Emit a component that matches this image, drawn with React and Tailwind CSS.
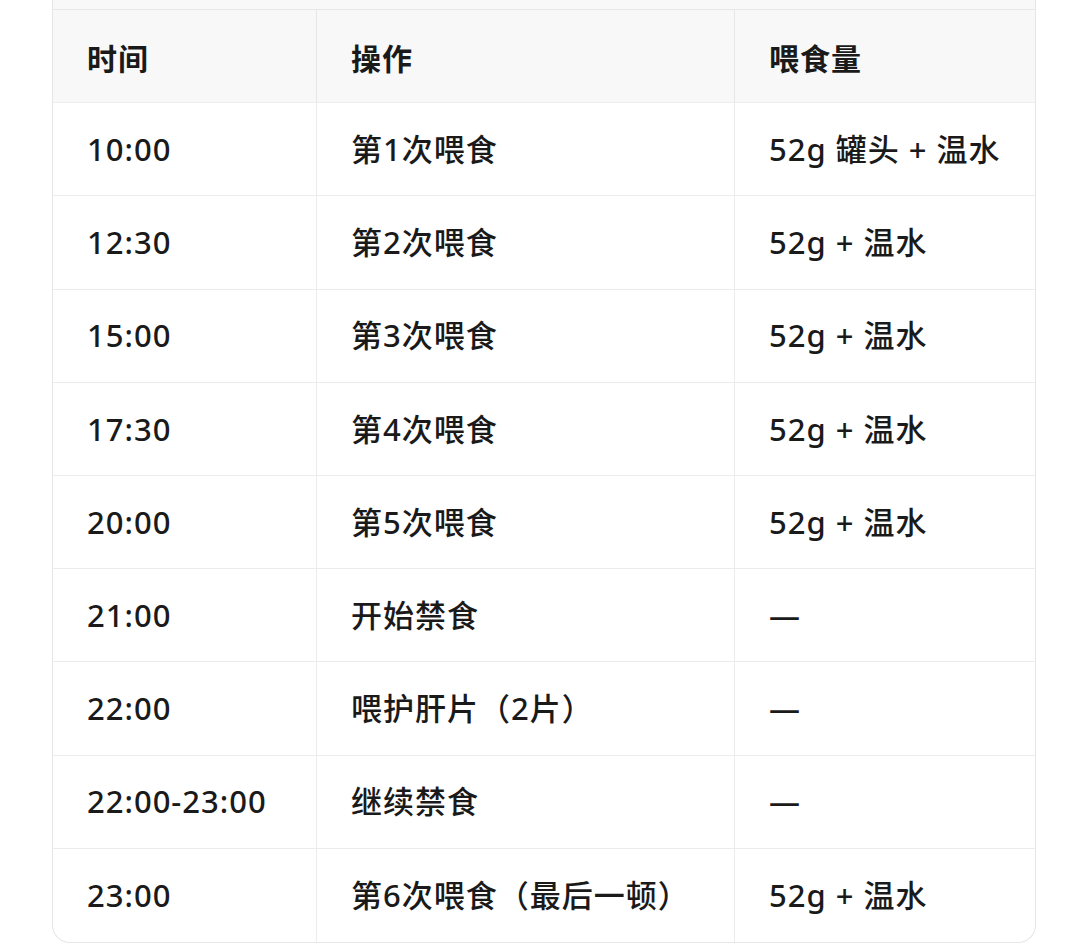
import React from "react";

const rows = [
  { time: "10:00", action: "第1次喂食", amount: "52g 罐头 + 温水" },
  { time: "12:30", action: "第2次喂食", amount: "52g + 温水" },
  { time: "15:00", action: "第3次喂食", amount: "52g + 温水" },
  { time: "17:30", action: "第4次喂食", amount: "52g + 温水" },
  { time: "20:00", action: "第5次喂食", amount: "52g + 温水" },
  { time: "21:00", action: "开始禁食", amount: "—" },
  { time: "22:00", action: "喂护肝片（2片）", amount: "—" },
  { time: "22:00-23:00", action: "继续禁食", amount: "—" },
  { time: "23:00", action: "第6次喂食（最后一顿）", amount: "52g + 温水" },
];

export default function App() {
  return (
    <div
      className="min-h-[947px] bg-white text-[#1a1a1a]"
      style={{ fontFamily: '"Noto Sans", "Noto Sans CJK SC", sans-serif' }}
    >
      <div className="ml-[52px] w-[984px] border-x border-b border-[#e6e6e6] rounded-b-[18px] overflow-hidden">
        {/* top of the previous block, cut off */}
        <div className="h-[10px] bg-[#f8f8f9] border-b border-[#e6e6e6]" />

        {/* Header */}
        <div className="grid grid-cols-[263px_418px_1fr] h-[93.2px] bg-[#f8f8f9] border-b border-[#ececec] text-[30px] font-bold tracking-[1px]">
          <div className="flex items-center pl-[34px] pt-[5px]">时间</div>
          <div className="flex items-center pl-[34px] pt-[5px] border-l border-[#e6e6e6]">操作</div>
          <div className="flex items-center pl-[34px] pt-[5px] border-l border-[#e6e6e6]">喂食量</div>
        </div>

        {/* Rows */}
        {rows.map((row, i) => (
          <div
            key={row.time + row.action}
            className={`grid grid-cols-[263px_418px_1fr] h-[93.2px] text-[31px] font-medium tracking-[1px] ${
              i < rows.length - 1 ? "border-b border-[#ececec]" : ""
            }`}
          >
            <div className="flex items-center pl-[34px]">{row.time}</div>
            <div className="flex items-center pl-[34px] border-l border-[#ececec]">{row.action}</div>
            <div className="flex items-center pl-[34px] border-l border-[#ececec]">{row.amount}</div>
          </div>
        ))}
      </div>
    </div>
  );
}
